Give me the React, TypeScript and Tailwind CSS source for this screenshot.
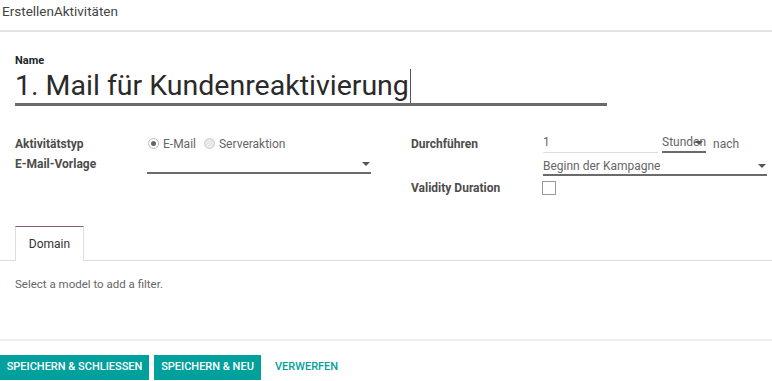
export default function App() {
  return (
    <div className="w-[772px] h-[381px] overflow-hidden bg-white text-[#4c4c4c] font-['Roboto',sans-serif] flex flex-col">
      {/* Kopfzeile */}
      <div className="h-[32px] border-b-2 border-[#e2e2e2] px-[2px] pt-[1px] text-[13.5px] leading-[20px] text-[#444]">
        ErstellenAktivitäten
      </div>

      {/* Formular */}
      <div className="px-[15px] pt-[22px]">
        <div className="text-[11px] font-bold text-[#212529] leading-[14px]">Name</div>
        <div className="w-[592px] h-[38px] border-b-[3px] border-[#6b6b6b] text-[28.5px] leading-[36px] text-[#2a2a2a] flex items-center">
          1. Mail für Kundenreaktivierung
          <span className="inline-block w-px h-[34px] bg-[#555] ml-[1px]" />
        </div>

        <div className="mt-[29px] flex text-[12px]">
          {/* linke Spalte */}
          <div className="w-[356px] flex flex-col">
            <div className="flex items-center h-[17px]">
              <div className="w-[132px] font-bold text-[#4c4c4c]">Aktivitätstyp</div>
              <div className="flex items-center text-[#666]">
                <span className="w-[11px] h-[11px] rounded-full border border-[#bbb] flex items-center justify-center ml-px">
                  <span className="w-[5px] h-[5px] rounded-full bg-[#666]" />
                </span>
                <span className="ml-[4px]">E-Mail</span>
                <span className="w-[11px] h-[11px] rounded-full border border-[#ccc] bg-[#e9e9e9] ml-[8px]" />
                <span className="ml-[4px]">Serveraktion</span>
              </div>
            </div>
            <div className="flex items-start mt-[4px]">
              <div className="w-[132px] font-bold leading-[16px]">E-Mail-Vorlage</div>
              <div className="w-[224px] h-[18px] border-b-2 border-[#6b6b6b] flex justify-end items-center pr-[1px]">
                <span className="w-0 h-0 border-x-[4px] border-x-transparent border-t-[4px] border-t-[#555]" />
              </div>
            </div>
          </div>

          {/* rechte Spalte */}
          <div className="ml-[40px] w-[356px] flex flex-col">
            <div className="flex items-center h-[17px]">
              <div className="w-[132px] font-bold">Durchführen</div>
              <div className="w-[115px] h-[19px] border-b border-[#ddd] text-[#666] leading-[17px]">1</div>
              <div className="ml-[4px] w-[44px] h-[19px] border-b-2 border-[#6b6b6b] text-[#666] leading-[17px] relative">
                Stunden
                <span className="absolute right-[3px] top-[7px] w-0 h-0 border-x-[4px] border-x-transparent border-t-[4px] border-t-[#555]" />
              </div>
              <div className="ml-[7px] text-[#666]">nach</div>
            </div>
            <div className="flex mt-[4px]">
              <div className="w-[132px]" />
              <div className="w-[224px] h-[20px] border-b-2 border-[#6b6b6b] text-[#666] flex items-center justify-between pr-[1px] pt-[2px]">
                <span>Beginn der Kampagne</span>
                <span className="w-0 h-0 border-x-[4px] border-x-transparent border-t-[4px] border-t-[#555]" />
              </div>
            </div>
            <div className="flex items-center mt-[3px] h-[18px]">
              <div className="w-[131px] font-bold">Validity Duration</div>
              <span className="w-[14px] h-[14px] border border-[#999] bg-white" />
            </div>
          </div>
        </div>
      </div>

      {/* Tabs */}
      <div className="mt-[29px] border-b border-[#ddd] h-[35px] flex px-[15px]">
        <div className="w-[69px] h-[35px] border border-b-0 border-[#ddd] border-t-[#875a7b] bg-white -mb-px flex items-center justify-center text-[12px] text-[#333]">
          Domain
        </div>
      </div>
      <div className="px-[15px] pt-[15px] text-[11.5px] text-[#666]">Select a model to add a filter.</div>

      {/* Fußzeile */}
      <div className="mt-auto border-t-2 border-[#eee] h-[42px] flex items-end pb-[1px]">
        <div className="flex items-center gap-[5px] h-[25px]">
          <button className="h-[25px] whitespace-nowrap bg-[#00a09d] text-white text-[11px] font-medium w-[149px]">
            SPEICHERN &amp; SCHLIESSEN
          </button>
          <button className="h-[25px] whitespace-nowrap bg-[#00a09d] text-white text-[11px] font-medium w-[107px]">
            SPEICHERN &amp; NEU
          </button>
          <button className="h-[25px] whitespace-nowrap px-[9px] text-[#00a09d] text-[11px] font-medium">VERWERFEN</button>
        </div>
      </div>
    </div>
  );
}
